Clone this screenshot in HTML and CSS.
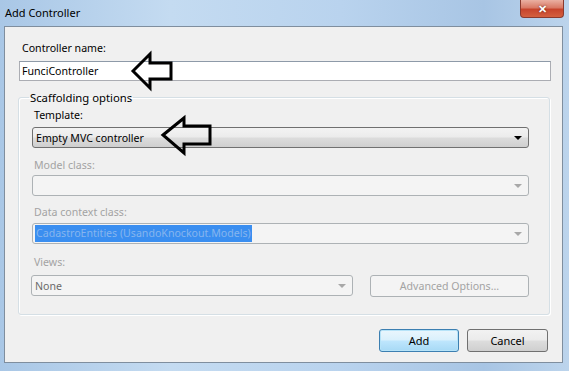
FILE: index.html
```html
<!DOCTYPE html>
<html lang="en">
<head>
    <meta charset="UTF-8">
    <title>Add Controller</title>
    <link rel="stylesheet" href="styles.css">
</head>
<body>
    <div class="window">
        <div class="titlebar">
            <span class="title">Add Controller</span>
            <span class="close">&#x2715;</span>
        </div>

        <div class="panel">
            <label class="label">Controller name:</label>
            <div class="textbox">FunciController</div>

            <fieldset class="group">
                <legend>Scaffolding options</legend>

                <label class="label lbl-template">Template:</label>
                <div class="combo combo-template">
                    <span>Empty MVC controller</span>
                    <span class="arrow"></span>
                </div>

                <label class="label disabled lbl-model">Model class:</label>
                <div class="combo off combo-model">
                    <span></span>
                    <span class="arrow"></span>
                </div>

                <label class="label disabled lbl-context">Data context class:</label>
                <div class="combo off combo-context">
                    <span class="selected">CadastroEntities (UsandoKnockout.Models)</span>
                    <span class="arrow"></span>
                </div>

                <label class="label disabled lbl-views">Views:</label>
                <div class="views-row">
                    <div class="combo off combo-views">
                        <span class="none">None</span>
                        <span class="arrow"></span>
                    </div>
                    <div class="btn-advanced">Advanced Options...</div>
                </div>
            </fieldset>

            <div class="buttons">
                <div class="btn btn-add">Add</div>
                <div class="btn">Cancel</div>
            </div>
        </div>
    </div>

    <!-- frecce disegnate sopra lo screenshot -->
    <svg class="arrows" width="569" height="371" viewBox="0 0 569 371">
        <polygon points="133,71 150,54 150,63 171,63 171,79 150,79 150,88" />
        <polygon points="163,135 184,118 184,126 210,126 210,144 184,144 184,153" />
    </svg>
</body>
</html>
```

FILE: styles.css
```css
body {
    margin: 0;
    font-family: "Noto Sans", "Open Sans", sans-serif;
    font-size: 10.6px;
    color: #000;
    background-color: #aac8e6;
}
.window {
    width: 569px;
    height: 371px;
    box-sizing: border-box;
    background: linear-gradient(90deg, #a9c7e6 0%, #c4dbf1 30%, #b9d3ee 60%, #a8c5e4 85%, #bcd4ec 100%);
    padding: 0 6px 8px 4px;
    position: relative;
}
.titlebar {
    height: 26px;
    display: flex;
    justify-content: space-between;
    align-items: flex-start;
}
.title {
    font-size: 11px;
    padding-top: 5px;
    margin-left: 1px;
    color: #000;
}
.close {
    width: 44px;
    height: 18px;
    margin-right: -1px;
    box-sizing: border-box;
    border: 1px solid #8a3a2e;
    border-top: none;
    border-radius: 0 0 4px 4px;
    background: linear-gradient(#eab0a2 0%, #d97a66 45%, #c7442c 55%, #d4603f 100%);
    color: #fff;
    font-size: 11px;
    font-weight: bold;
    text-align: center;
    line-height: 17px;
    text-shadow: 0 0 2px #5a1a10;
}
.panel {
    background-color: #f0f0f0;
    border: 1px solid #7f8e9e;
    padding: 14px 11px 10px 14px;
}
.label {
    display: block;
    line-height: 15px;
    height: 15px;
    margin-left: 3px;
}
.label.disabled {
    color: #a3a3a3;
}
.textbox {
    margin-top: 5px;
    height: 20px;
    box-sizing: border-box;
    background-color: #fff;
    border: 1px solid #abadb3;
    border-top-color: #8e9aa8;
    padding-left: 2px;
    line-height: 18px;
}
.group {
    margin: 9px 1px 0 -1px;
    padding: 0 20px 17px 12px;
    border: 1px solid #d5dfe5;
    border-radius: 3px;
    box-shadow: inset 1px 1px 0 #fff, 1px 1px 0 #fff;
    min-width: 0;
}
.group legend {
    padding: 0 1px;
    margin-left: -2px;
    line-height: 15px;
    font-size: 11.3px;
}
.lbl-template { margin-top: 3px; }
.lbl-model { margin-top: 10px; }
.lbl-context { margin-top: 9px; }
.lbl-views { margin-top: 11px; }

.combo {
    height: 21px;
    box-sizing: border-box;
    border: 1px solid #707070;
    border-radius: 3px;
    display: flex;
    align-items: center;
    justify-content: space-between;
    padding: 0 4px 0 3px;
}
.combo-template {
    margin-top: 4px;
    margin-left: 1px;
    background: linear-gradient(#f3f3f3 0%, #ebebeb 48%, #dcdcdc 52%, #cfcfcf 100%);
}
.combo-model { margin-top: 2px; margin-left: 1px; }
.combo-context { margin-top: 3px; margin-left: 1px; padding-left: 2px; }
.combo.off {
    border-color: #adb2b5;
    background-color: #f4f4f4;
}
.arrow {
    width: 0;
    height: 0;
    border-left: 4px solid transparent;
    border-right: 4px solid transparent;
    border-top: 4px solid #000;
    margin-right: 2px;
}
.combo.off .arrow {
    border-top-color: #a8a8a8;
}
.selected {
    background-color: #3a8ef0;
    color: #86b5ee;
    padding: 1px 1px;
    line-height: 15px;
}
.none {
    color: #6a6a6a;
}
.views-row {
    margin-top: 5px;
    display: flex;
    gap: 17px;
    align-items: flex-start;
}
.combo-views {
    width: 322px;
    flex: none;
}
.btn-advanced {
    flex: 1;
    height: 22px;
    box-sizing: border-box;
    border: 1px solid #adb2b5;
    border-radius: 3px;
    background-color: #f4f4f4;
    color: #a3a3a3;
    text-align: center;
    line-height: 20px;
}
.buttons {
    margin-top: 14px;
    display: flex;
    justify-content: flex-end;
    gap: 8px;
    margin-right: 3px;
}
.btn {
    width: 81px;
    height: 23px;
    box-sizing: border-box;
    border: 1px solid #707070;
    border-radius: 3px;
    background: linear-gradient(#f2f2f2 0%, #ebebeb 48%, #dddddd 52%, #cfcfcf 100%);
    text-align: center;
    line-height: 21px;
    font-size: 11px;
}
.btn-add {
    width: 80px;
    border-color: #3c7fb1;
    background: linear-gradient(#eaf6fd 0%, #d9f0fc 48%, #bee6fd 52%, #a7d9f5 100%);
    box-shadow: inset 0 0 0 1px #b6e3f8;
}
.arrows {
    position: absolute;
    top: 0;
    left: 0;
    pointer-events: none;
}
.arrows polygon {
    fill: none;
    stroke: #000;
    stroke-width: 3;
    stroke-linejoin: miter;
}
```
